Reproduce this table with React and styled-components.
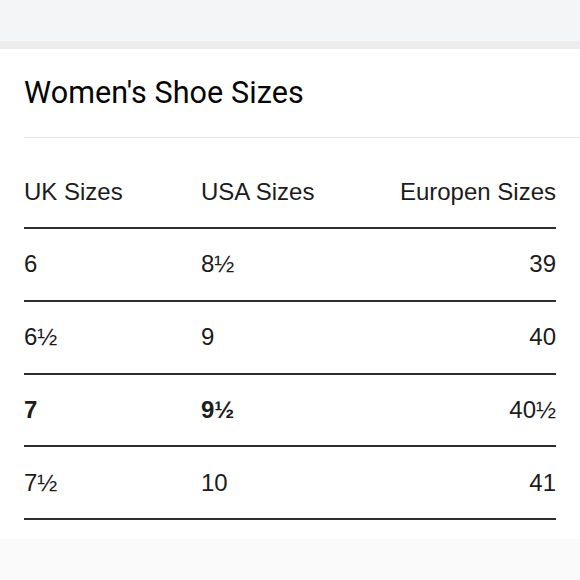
import React from "react";
import styled, { createGlobalStyle } from "styled-components";

const GlobalStyle = createGlobalStyle`
  html, body {
    margin: 0;
    padding: 0;
    background: #ffffff;
  }
  body {
    font-family: "Liberation Sans", Arial, sans-serif;
    color: #222;
  }
`;

const Page = styled.div`
  width: 580px;
  height: 580px;
  display: flex;
  flex-direction: column;
  overflow: hidden;
`;

const TopBar = styled.div`
  height: 49px;
  flex-shrink: 0;
  background: linear-gradient(to bottom, #f4f5f6 0, #f4f5f6 41px, #ececed 41px);
`;

const Card = styled.section`
  flex: 1;
  background: #fff;
  padding-left: 24px;
`;

const Title = styled.h1`
  margin: 0;
  height: 89px;
  box-sizing: border-box;
  padding-top: 26px;
  font-family: Roboto, "Noto Sans", sans-serif;
  font-weight: 400;
  font-size: 30.5px;
  line-height: 36px;
  letter-spacing: 0.1px;
  color: #050505;
  border-bottom: 1px solid #e6e6e6;
`;

const Table = styled.div`
  margin-right: 24px;
`;

const Row = styled.div`
  display: grid;
  grid-template-columns: 177px 1fr 1fr;
  align-items: ${(p) => (p.$head ? "end" : "center")};
  height: ${(p) => (p.$head ? "68px" : "70.75px")};
  padding-bottom: ${(p) => (p.$head ? "21px" : "0")};
  border-bottom: 2px solid #2e2e2e;
`;

const Cell = styled.div`
  font-size: 24px;
  line-height: 28px;
  color: #1c1c1c;
  font-weight: ${(p) => (p.$bold ? 700 : 400)};
  text-align: ${(p) => (p.$right ? "right" : "left")};
`;

const BottomBand = styled.div`
  height: 41px;
  flex-shrink: 0;
  background: #fafafa;
`;

const rows = [
  ["6", "8½", "39"],
  ["6½", "9", "40"],
  ["7", "9½", "40½", true],
  ["7½", "10", "41"],
];

export default function App() {
  return (
    <>
      <GlobalStyle />
      <Page>
        <TopBar />
        <Card>
          <Title>Women's Shoe Sizes</Title>
          <Table>
            <Row $head>
              <Cell>UK Sizes</Cell>
              <Cell>USA Sizes</Cell>
              <Cell $right>Europen Sizes</Cell>
            </Row>
            {rows.map(([uk, usa, eu, bold]) => (
              <Row key={uk}>
                <Cell $bold={bold}>{uk}</Cell>
                <Cell $bold={bold}>{usa}</Cell>
                <Cell $right>{eu}</Cell>
              </Row>
            ))}
          </Table>
        </Card>
        <BottomBand />
      </Page>
    </>
  );
}
